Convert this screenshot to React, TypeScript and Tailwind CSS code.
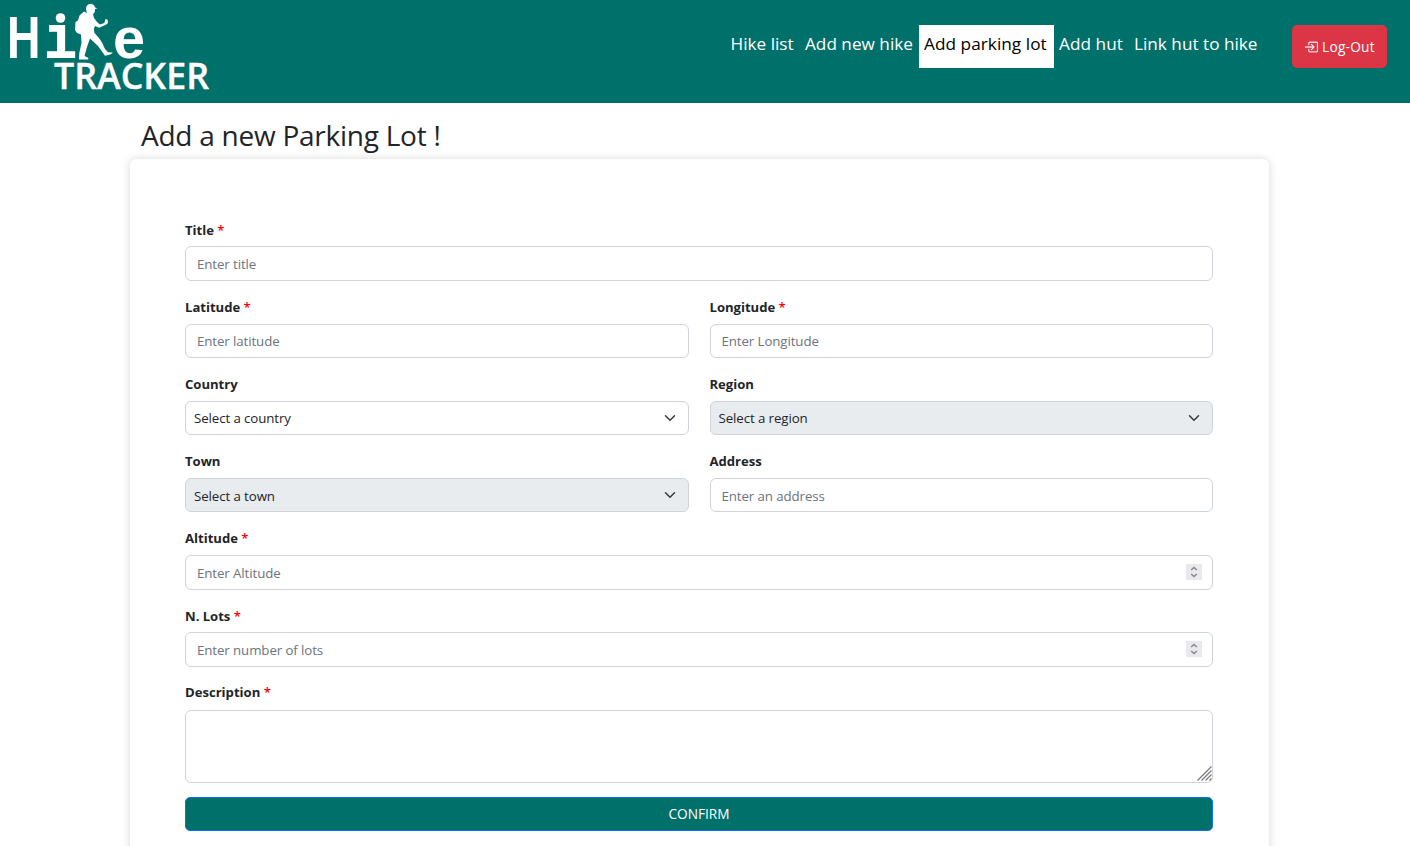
import React from "react";

const control =
  "block w-full h-[34.4px] rounded-[6px] border border-[#ced4da] bg-white px-[11px] pt-px text-[13.3px] tracking-[-0.1px] text-[#212529] placeholder:text-[#6c757d] placeholder:opacity-100 outline-none";

function Field({ label, required, children }: { label: string; required?: boolean; children: React.ReactNode }) {
  return (
    <div className="flex h-[77.2px] min-w-0 flex-1 flex-col">
      <label className="h-[27.8px] text-[13.1px] leading-[22px] font-bold tracking-[-0.02px] whitespace-nowrap text-[#212529]">
        {label} {required && <span className="font-semibold text-[#f00]">*</span>}
      </label>
      {children}
    </div>
  );
}

function SelectBox({ text, disabled }: { text: string; disabled?: boolean }) {
  return (
    <div className="relative">
      <select
        disabled={disabled}
        className="block h-[34.4px] w-full appearance-none rounded-[6px] border border-[#ced4da] bg-white px-2 pt-[3px] text-[13.3px] tracking-[-0.1px] text-[#212529] opacity-100 outline-none disabled:bg-[#e9ecef]"
      >
        <option>{text}</option>
      </select>
      <svg className="pointer-events-none absolute top-[11px] right-[13px] h-[12px] w-[12px]" viewBox="0 0 16 16" fill="none">
        <path d="m2 5 6 6 6-6" stroke="#343a40" strokeWidth="2" strokeLinecap="round" strokeLinejoin="round" />
      </svg>
    </div>
  );
}

function NumberBox({ placeholder }: { placeholder: string }) {
  return (
    <div className="relative">
      <input type="text" inputMode="numeric" placeholder={placeholder} className={control} />
      <span className="absolute top-[9px] right-[11px] flex h-4 w-4 items-center justify-center bg-[#e9e9ed]">
        <svg className="h-4 w-4" viewBox="0 0 16 16" fill="none" stroke="#85858f" strokeWidth="1.4">
          <path d="M5.2 6 8 3.5 10.8 6M5.2 10 8 12.5 10.8 10" />
        </svg>
      </span>
    </div>
  );
}

function Logo() {
  return (
    <svg className="block h-[103px] w-[220px]" viewBox="0 0 220 103" fill="#fff" role="img" aria-label="Hike Tracker">
      <clipPath id="stem">
        <rect x="40" y="23" width="36" height="37" />
      </clipPath>
      <g fontWeight="bold">
        <text x="7" y="58" fontSize="60" fontFamily="'Liberation Sans', sans-serif" textLength="33.500" lengthAdjust="spacingAndGlyphs">H</text>
        <g clipPath="url(#stem)">
          <text x="43" y="57.500" fontSize="60" fontFamily="'DejaVu Sans Mono', monospace" textLength="34" lengthAdjust="spacingAndGlyphs">i</text>
        </g>
        <text x="113" y="58" fontSize="57" fontFamily="'Liberation Sans', sans-serif" textLength="32" lengthAdjust="spacingAndGlyphs">e</text>
      </g>
      <circle cx="60.500" cy="18" r="4.800" />
      <text x="54" y="89" fontSize="36.500" fontWeight="600" fontFamily="'Open Sans', sans-serif" stroke="#fff" strokeWidth=".4" textLength="155" lengthAdjust="spacingAndGlyphs">TRACKER</text>
      <path d="M86 9 86.500 6 88.500 4.200 91 3.800 94 5 95 7.500 97.500 8.300 95 9 94.800 12 93 14.200 94 18 97 22 100 24.500 104.300 23 105.500 19 107.500 19.500 108 23 106 24.800 99 27.800 95 26 93.800 29 94.500 33 99 38 102 42.500 105 49 108 52.200 112.800 52.500 111 54.200 105 55.800 102 51.500 98 46 90 38.500 87 47 84.500 56 88.500 58 88 59.500 79 59.500 79.300 53 81.500 43 81 34.500 77 33 75 30 75.500 22 78 20.500 79.500 15.500 84 11.500 87 13 86.500 11.500Z" />
    </svg>
  );
}

const links = [
  { text: "Hike list", cls: "w-[74.5px] text-white" },
  { text: "Add new hike", cls: "w-[119px] text-white" },
  { text: "Add parking lot", cls: "w-[135px] bg-white text-black tracking-[0.05px]" },
  { text: "Add hut", cls: "w-[75px] text-white tracking-[0.05px]" },
  { text: "Link hut to hike", cls: "w-[133px] text-white" },
];

export default function App() {
  return (
    <div className="h-[846px] w-full overflow-hidden bg-white font-['Open_Sans',sans-serif] text-[#212529]">
      <header className="flex h-[103px] items-start justify-between bg-[#00706b]">
        <Logo />
        <div className="flex pt-[25px] pr-[23px]">
          <nav className="flex">
            {links.map((l) => (
              <a key={l.text} className={`h-[43px] pl-[5px] text-[17.2px] leading-[37px] whitespace-nowrap ${l.cls}`}>
                {l.text}
              </a>
            ))}
          </nav>
          <button className="ml-[30px] flex h-[43px] w-[95px] items-center rounded-[5px] bg-[#dc3545] pt-px pl-[12px] text-[13.7px] tracking-[0.25px] whitespace-nowrap text-white">
            <svg className="mr-[4px] h-[14px] w-[14px] shrink-0" viewBox="0 0 16 16" fill="#fff" stroke="#fff" strokeWidth=".25">
              <path fillRule="evenodd" d="M6 3.500a.5.5 0 0 1 .5-.5h8a.5.5 0 0 1 .5.5v9a.5.5 0 0 1-.5.5h-8a.5.5 0 0 1-.5-.5v-2a.5.5 0 0 0-1 0v2A1.500 1.500 0 0 0 6.500 14h8a1.500 1.500 0 0 0 1.500-1.500v-9A1.500 1.500 0 0 0 14.500 2h-8A1.500 1.500 0 0 0 5 3.500v2a.5.5 0 0 0 1 0z" />
              <path fillRule="evenodd" d="M11.854 8.354a.5.5 0 0 0 0-.708l-3-3a.5.5 0 1 0-.708.708L10.293 7.500H1.500a.5.5 0 0 0 0 1h8.793l-2.147 2.146a.5.5 0 0 0 .708.708z" />
            </svg>
            Log-Out
          </button>
        </div>
      </header>
      <main className="ml-[130px] w-[1139px]">
        <h1 className="h-[56px] pl-[11px] text-[28px] leading-[65px] tracking-[-0.25px] whitespace-nowrap">Add a new Parking Lot !</h1>
        <form className="h-[760px] rounded-[6px] bg-white pt-[59.6px] pr-[56px] pl-[55px] shadow-[0_0_8px_rgba(0,0,0,0.16)]">
          <Field label="Title" required>
            <input placeholder="Enter title" className={control} />
          </Field>
          <div className="flex gap-[21px]">
            <Field label="Latitude" required>
              <input placeholder="Enter latitude" className={control} />
            </Field>
            <Field label="Longitude" required>
              <input placeholder="Enter Longitude" className={control} />
            </Field>
          </div>
          <div className="flex gap-[21px]">
            <Field label="Country">
              <SelectBox text="Select a country" />
            </Field>
            <Field label="Region">
              <SelectBox text="Select a region" disabled />
            </Field>
          </div>
          <div className="flex gap-[21px]">
            <Field label="Town">
              <SelectBox text="Select a town" disabled />
            </Field>
            <Field label="Address">
              <input placeholder="Enter an address" className={control} />
            </Field>
          </div>
          <Field label="Altitude" required>
            <NumberBox placeholder="Enter Altitude" />
          </Field>
          <Field label="N. Lots" required>
            <NumberBox placeholder="Enter number of lots" />
          </Field>
          <div className="relative h-[115px]">
            <label className="block h-[27.8px] text-[13.1px] leading-[21px] font-bold">
              Description <span className="font-semibold text-[#f00]">*</span>
            </label>
            <textarea className="block h-[73px] w-full resize-none rounded-[6px] border border-[#ced4da] bg-white outline-none" />
            <svg className="absolute top-[84px] right-[1px] h-[15px] w-[15px]" viewBox="0 0 15 15" stroke="#777" strokeWidth="1.2">
              <path d="M.5 14.500 14.500 .5M4.500 14.500 14.500 4.500M8.500 14.500 14.500 8.500M12.500 14.500 14.500 12.500" />
            </svg>
          </div>
          <button className="block h-[34px] w-full rounded-[5px] border border-[#0d6efd] bg-[#00706b] pt-px text-[13.7px] text-white">CONFIRM</button>
        </form>
      </main>
    </div>
  );
}
